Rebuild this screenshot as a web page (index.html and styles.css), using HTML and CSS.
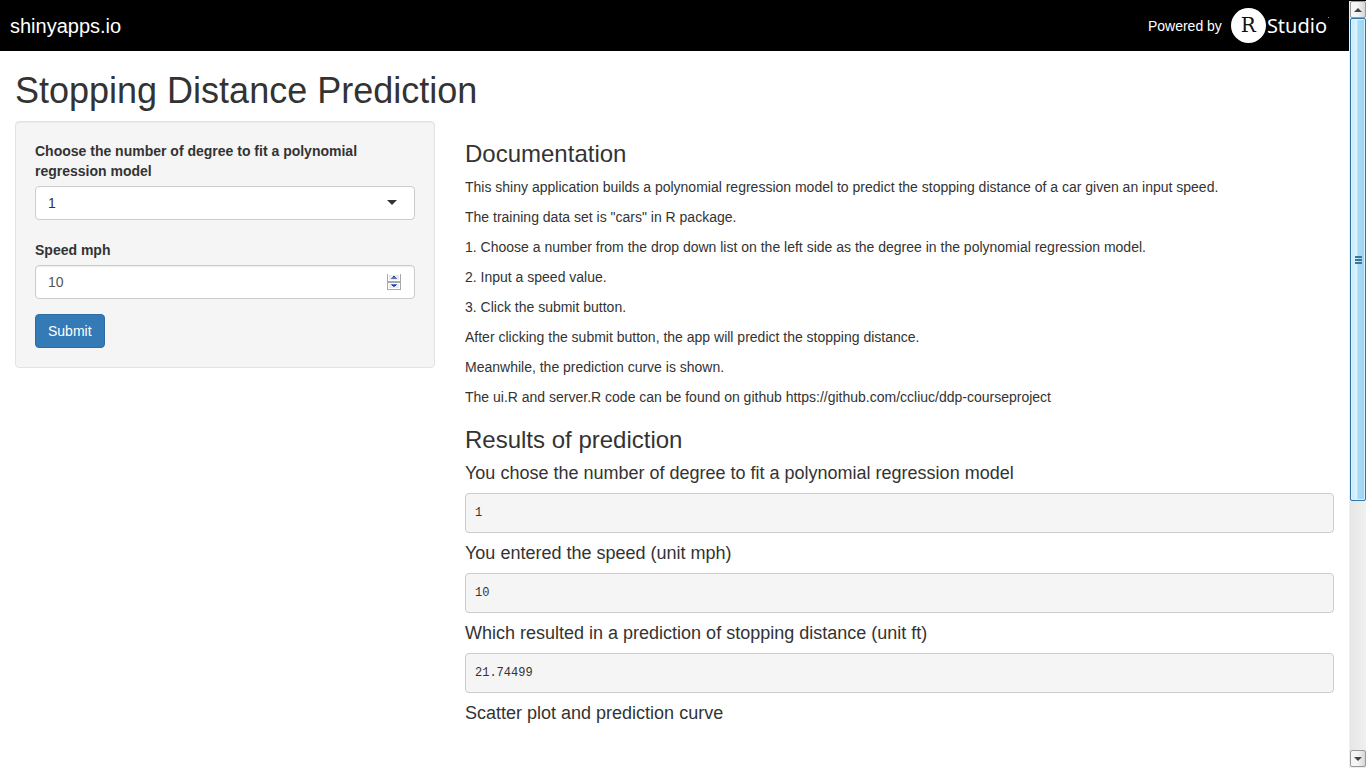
FILE: index.html
```html
<!DOCTYPE html>
<html lang="en">
<head>
<meta charset="utf-8">
<meta name="viewport" content="width=device-width, initial-scale=1">
<title>Stopping Distance Prediction</title>
<link rel="stylesheet" href="styles.css">
</head>
<body>
<div class="window">
  <div class="page">
    <header class="topbar">
      <a class="brand" href="#">shinyapps.io</a>
      <a class="powered" href="#">
        <span>Powered by</span>
        <span class="logo"><span class="logo-ball">R</span><span class="logo-word">Studio</span><span class="logo-mark"></span></span>
      </a>
    </header>
    <main class="container">
      <h1 class="title">Stopping Distance Prediction</h1>
      <div class="row">
        <form class="well">
          <div class="field field-select">
            <label for="degree">Choose the number of degree to fit a polynomial regression model</label>
            <div class="control">
              <select id="degree" class="input">
                <option selected>1</option><option>2</option><option>3</option>
              </select>
              <svg class="caret" viewBox="0 0 10 5" width="10" height="5" aria-hidden="true"><path d="M0 0h10L5 5z" fill="#333"/></svg>
            </div>
          </div>
          <div class="field">
            <label for="speed">Speed mph</label>
            <div class="control">
              <input id="speed" class="input number" type="number" value="10">
              <svg class="spinner" viewBox="0 0 14 16" width="14" height="16" aria-hidden="true" shape-rendering="crispEdges">
                <path fill="#a9a9ad" d="M0 0h1v16H0zM13 0h1v16h-1zM1 7h12v2H1zM1 15h12v1H1z"/>
                <path fill="#fff" d="M1 0h12v7H1zM1 9h12v6H1z"/>
                <path fill="#ececf0" d="M2 1h10v5H2zM2 10h10v4H2z"/>
                <path fill="#5a78c8" d="M6 2h2v1h1v1h1v1H4V4h1V3h1zM4 10h6v1H9v1H8v1H6v-1H5v-1H4z"/>
                <path fill="#30406c" d="M6 2h2v1H6zM5 11h4v1H5z"/>
              </svg>
            </div>
          </div>
          <button class="submit" type="button">Submit</button>
        </form>
        <div class="content">
          <section class="docs">
            <h2>Documentation</h2>
            <p>This shiny application builds a polynomial regression model to predict the stopping distance of a car given an input speed.</p>
            <p>The training data set is "cars" in R package.</p>
            <p>1. Choose a number from the drop down list on the left side as the degree in the polynomial regression model.</p>
            <p>2. Input a speed value.</p>
            <p>3. Click the submit button.</p>
            <p>After clicking the submit button, the app will predict the stopping distance.</p>
            <p>Meanwhile, the prediction curve is shown.</p>
            <p>The ui.R and server.R code can be found on github https://github.com/ccliuc/ddp-courseproject</p>
          </section>
          <section>
            <h2>Results of prediction</h2>
            <h3>You chose the number of degree to fit a polynomial regression model</h3>
            <pre>1</pre>
            <h3>You entered the speed (unit mph)</h3>
            <pre>10</pre>
            <h3>Which resulted in a prediction of stopping distance (unit ft)</h3>
            <pre>21.74499</pre>
            <h3>Scatter plot and prediction curve</h3>
          </section>
        </div>
      </div>
    </main>
  </div>
  <div class="scrollbar" aria-hidden="true">
    <div class="arrow"><svg viewBox="0 0 8 4" width="8" height="4"><path d="M4 0l4 4H0z" fill="#444"/></svg></div>
    <div class="track">
      <div class="thumb"><i></i><i></i><i></i></div>
    </div>
    <div class="arrow"><svg viewBox="0 0 8 4" width="8" height="4"><path d="M0 0h8L4 4z" fill="#444"/></svg></div>
  </div>
</div>
</body>
</html>
```
FILE: styles.css
```css
* { box-sizing: border-box; }

body {
  margin: 0;
  background: #fff;
  color: #333;
  font: 14px/20px "Liberation Sans", Arial, sans-serif;
}

.window { display: flex; height: 100vh; }
.page { flex: 1; min-width: 0; overflow: hidden; }

.topbar {
  display: flex;
  align-items: center;
  justify-content: space-between;
  height: 51px;
  padding: 0 20px 0 10px;
  background: #000;
}
.topbar a { color: #fff; text-decoration: none; }
.brand { font-size: 20px; }
.powered { display: flex; align-items: center; gap: 9px; }
.logo { display: flex; align-items: center; gap: 1px; }
.logo-ball {
  display: flex;
  align-items: center;
  justify-content: center;
  width: 35px;
  height: 35px;
  border-radius: 50%;
  background: #fff;
  color: #111;
  font: 20px/35px "DejaVu Serif", serif;
}
.logo-word { font: 20px/35px "Noto Sans", sans-serif; }
.logo-mark { width: 1px; height: 1px; margin-bottom: 16px; background: #999; }

.container { padding: 0 15px; }
.title { margin: 20px 0 10px; font-size: 36px; font-weight: 400; line-height: 40px; }

.row { display: grid; grid-template-columns: minmax(0, 420fr) minmax(0, 869fr); gap: 30px; align-items: start; }

.well {
  padding: 19px;
  border: 1px solid #e3e3e3;
  border-radius: 4px;
  background: #f5f5f5;
  box-shadow: inset 0 1px 1px rgba(0, 0, 0, .05);
}
.field { margin-bottom: 15px; }
.field-select { margin-bottom: 20px; }
.field label { display: block; margin-bottom: 5px; font-weight: 700; }
.control { position: relative; }
.input {
  display: block;
  width: 100%;
  height: 34px;
  padding: 6px 12px;
  border: 1px solid #ccc;
  border-radius: 4px;
  background: #fff;
  color: #333;
  font: inherit;
  appearance: none;
}
.number { color: #555; box-shadow: inset 0 1px 1px rgba(0, 0, 0, .075); appearance: textfield; }
.number::-webkit-inner-spin-button { appearance: none; }
.caret { position: absolute; top: 14px; right: 18px; pointer-events: none; }
.spinner { position: absolute; top: 9px; right: 14px; pointer-events: none; }

.submit {
  display: block;
  height: 34px;
  padding: 6px 12px;
  border: 1px solid #2e6da4;
  border-radius: 4px;
  background: #337ab7;
  color: #fff;
  font: inherit;
}

.content { padding-top: 20px; }
h2 { margin: 0 0 10px; font-size: 24px; font-weight: 400; line-height: 26px; }
h3 { margin: 10px 0; font-size: 18px; font-weight: 400; line-height: 20px; }
p { margin: 0 0 10px; }
.docs { margin-bottom: 20px; }
pre {
  margin: 0 0 10px;
  padding: 10px 9px;
  border: 1px solid #ccc;
  border-radius: 4px;
  background: #f5f5f5;
  font: 12px/18px "Liberation Mono", monospace;
}

.scrollbar {
  display: flex;
  flex-direction: column;
  width: 17px;
  padding: 0 0 1px 1px;
  border-top: 1px solid #000;
  background: #eee;
}
.arrow {
  display: flex;
  align-items: center;
  justify-content: center;
  height: 17px;
  border: 1px solid #999;
  border-radius: 2px;
  background: linear-gradient(90deg, #f5f5f5 45%, #d5d6d9);
}
.track { flex: 1; background: linear-gradient(90deg, #e6e6e6, #f0f0f0); }
.thumb {
  display: flex;
  flex-direction: column;
  align-items: center;
  justify-content: center;
  gap: 1px;
  height: 66%;
  border: 1px solid #2f75a8;
  border-radius: 2px;
  background: linear-gradient(90deg, #c5e8fa, #e0f4fd 40%, #a9dcf7 50%, #98d2f2);
  box-shadow: inset 0 0 0 1px #d8f1fd;
}
.thumb i { width: 7px; height: 2px; background: #397799; }
```
